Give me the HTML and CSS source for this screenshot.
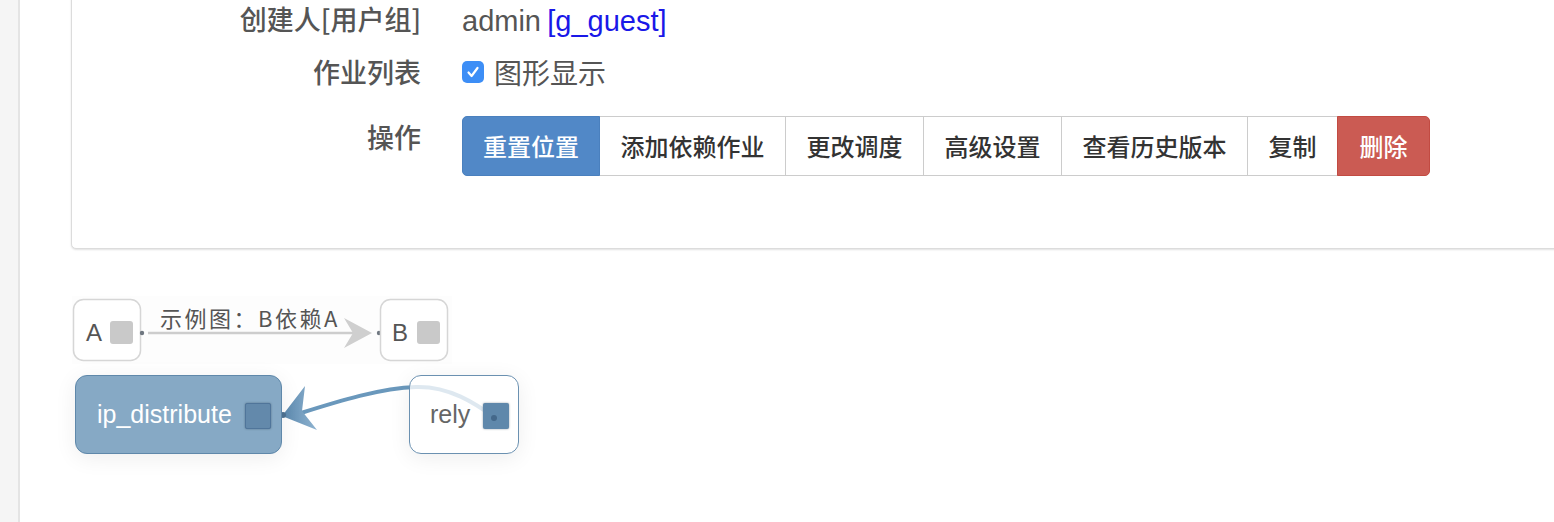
FILE: index.html
```html
<!DOCTYPE html>
<html lang="zh">
<head>
<meta charset="utf-8">
<title>作业详情</title>
<link rel="stylesheet" href="styles.css">
</head>
<body>
<div class="page">
  <aside class="side"></aside>
  <main class="main">
    <section class="panel">
      <div class="form">
        <div class="label">创建人[用户组]</div>
        <div class="value"><span class="latin">admin</span> <a class="group latin">[g_guest]</a></div>
        <div class="label">作业列表</div>
        <div class="value">
          <label class="check">
            <span class="box"><svg width="22" height="22" viewBox="0 0 22 22"><path d="M6.5 11.5 L9.6 15 L15.5 7" fill="none" stroke="#fff" stroke-width="2.2" stroke-linecap="round" stroke-linejoin="round"/></svg></span>
            <span>图形显示</span>
          </label>
        </div>
        <div class="label op">操作</div>
        <div class="value op-value">
          <div class="btn-group">
            <button class="btn primary">重置位置</button>
            <button class="btn">添加依赖作业</button>
            <button class="btn">更改调度</button>
            <button class="btn">高级设置</button>
            <button class="btn">查看历史版本</button>
            <button class="btn">复制</button>
            <button class="btn danger">删除</button>
          </div>
        </div>
      </div>
    </section>

    <div class="legend">
      <svg width="380" height="68" viewBox="0 0 380 68">
        <rect x="0" y="0" width="380" height="68" fill="#fdfdfd"/>
        <rect x="1.5" y="3.5" width="67" height="61" rx="10" fill="#fff" stroke="#d6d6d6" stroke-width="1.5"/>
        <text x="14" y="45" class="lg-node">A</text>
        <rect x="38" y="25" width="23" height="23" rx="3" fill="#c9c9c9"/>
        <circle cx="70" cy="37" r="2.2" fill="#6f7780"/>
        <line x1="76" y1="37" x2="284" y2="37" stroke="#cdcdcd" stroke-width="2.5"/>
        <polygon points="300,37 272,22 281,37 272,52" fill="#cfcfcf"/>
        <text x="88" y="31" class="lg-title">示例图：B依赖A</text>
        <circle cx="307" cy="37" r="2.2" fill="#6f7780"/>
        <rect x="308.5" y="3.5" width="67" height="61" rx="10" fill="#fff" stroke="#d6d6d6" stroke-width="1.5"/>
        <text x="320" y="45" class="lg-node">B</text>
        <rect x="345" y="25" width="23" height="23" rx="3" fill="#c9c9c9"/>
      </svg>
    </div>

    <div class="graph">
      <svg class="edges" width="600" height="152" viewBox="0 0 600 152">
        <defs>
          <linearGradient id="ah" x1="0" y1="0" x2="1" y2="0">
            <stop offset="0" stop-color="#5a88ae"/>
            <stop offset="1" stop-color="#8fb3d0"/>
          </linearGradient>
        </defs>
        <path d="M230,42 C268,30 310,17 345,16 C378,15 404,32 426,48" fill="none" stroke="#6a98bc" stroke-width="4"/>
        <polygon points="211,45 234,15 231,40 246,59" fill="url(#ah)"/>
        <circle cx="212" cy="44" r="3" fill="#4f7393"/>
      </svg>
      <div class="node job">
        <span class="node-name">ip_distribute</span>
        <span class="port"></span>
      </div>
      <div class="node rely">
        <span class="node-name">rely</span>
        <span class="port"><span class="port-dot"></span></span>
      </div>
    </div>
  </main>
</div>
</body>
</html>
```

FILE: styles.css
```css
* { box-sizing: border-box; }

html, body {
  margin: 0;
  padding: 0;
  background: #fff;
  overflow: hidden;
}

body {
  font-family: "Liberation Sans", "Noto Sans CJK SC", sans-serif;
  color: #555;
  width: 1554px;
  height: 522px;
}

.page {
  display: flex;
  height: 522px;
}

.side {
  width: 20px;
  flex: none;
  background: #f5f5f5;
  border-right: 2px solid #e4e4e4;
}

.main {
  flex: 1;
  min-width: 0;
  padding-left: 51px;
  overflow: hidden;
}

.panel {
  margin-top: -21px;
  margin-right: -20px;
  border: 1px solid #dcdcdc;
  border-radius: 5px;
  box-shadow: 0 1px 2px rgba(0, 0, 0, 0.12);
  padding: 22px 0 72px 0;
  background: #fff;
}

.form {
  display: grid;
  grid-template-columns: 349px 1fr;
  column-gap: 41px;
  row-gap: 17px;
  align-items: start;
}

.label {
  text-align: right;
  font-family: "Noto Sans CJK SC", sans-serif;
  font-size: 27px;
  font-weight: 500;
  line-height: 34px;
  color: #555;
}

.value {
  font-family: "Noto Sans CJK SC", sans-serif;
  font-size: 28px;
  line-height: 34px;
  color: #555;
}

.latin {
  font-family: "Liberation Sans", sans-serif;
  font-size: 29px;
}

.group {
  color: #1a18e8;
  text-decoration: none;
}

.label.op {
  margin-top: 10px;
  padding-top: 4px;
}

.op-value {
  margin-top: 10px;
}

.check {
  display: flex;
  align-items: center;
  gap: 10px;
}

.box {
  width: 22px;
  height: 22px;
  border-radius: 5px;
  background: #3d8ef6;
  display: flex;
}

.btn-group {
  display: flex;
}

.btn {
  font-family: "Noto Sans CJK SC", sans-serif;
  font-size: 24px;
  font-weight: 500;
  line-height: 32px;
  padding: 13px 20.5px;
  margin: 0;
  margin-left: -1px;
  border: 1px solid #cccccc;
  background: #fff;
  color: #333;
  border-radius: 0;
}

.btn:first-child {
  margin-left: 0;
  padding: 13px 20px;
  border-radius: 5px 0 0 5px;
}

.btn:last-child {
  border-radius: 0 5px 5px 0;
}

.btn.primary {
  background: #5188c7;
  border-color: #4a80be;
  color: #fff;
  position: relative;
}

.btn.danger {
  background: #cb5b53;
  border-color: #c24b42;
  color: #fff;
  position: relative;
  padding: 13px 21.5px;
}

.legend {
  margin-top: 47px;
  margin-left: 1px;
  height: 68px;
}

.legend svg {
  display: block;
}

.lg-node {
  font-family: "Liberation Sans", sans-serif;
  font-size: 24px;
  fill: #555;
}

.lg-title {
  font-family: "Noto Sans CJK SC", sans-serif;
  font-size: 22px;
  letter-spacing: 2.5px;
  fill: #555;
}

.graph {
  position: relative;
  margin-top: 7px;
  height: 152px;
}

.edges {
  position: absolute;
  left: 0;
  top: 0;
}

.node {
  position: absolute;
  top: 4px;
  height: 79px;
  border-radius: 12px;
  display: flex;
  align-items: center;
  justify-content: space-between;
  box-shadow: 0 4px 22px rgba(0, 0, 0, 0.07);
}

.node-name {
  font-family: "Liberation Sans", sans-serif;
  font-size: 25px;
}

.node.job {
  left: 4px;
  width: 207px;
  background: #86a9c5;
  border: 1.5px solid #5f88aa;
  padding: 0 10px 0 21px;
  color: #fff;
}

.node.rely {
  left: 338px;
  width: 110px;
  background: rgba(255, 255, 255, 0.78);
  border: 1.5px solid #6b91b1;
  padding: 0 9px 0 20px;
  color: #666;
}

.port {
  width: 26px;
  height: 26px;
  flex: none;
  position: relative;
  margin-top: 3px;
  border-radius: 2px;
}

.job .port {
  background: #6389ab;
  border: 1px solid #50759a;
  box-shadow: 0 0 2px rgba(30, 50, 70, 0.5);
}

.rely .port {
  background: #5f88ab;
  box-shadow: 0 0 2px rgba(30, 50, 70, 0.5);
}

.port-dot {
  position: absolute;
  left: 8px;
  top: 12px;
  width: 6px;
  height: 6px;
  border-radius: 50%;
  background: #44688a;
}
```
